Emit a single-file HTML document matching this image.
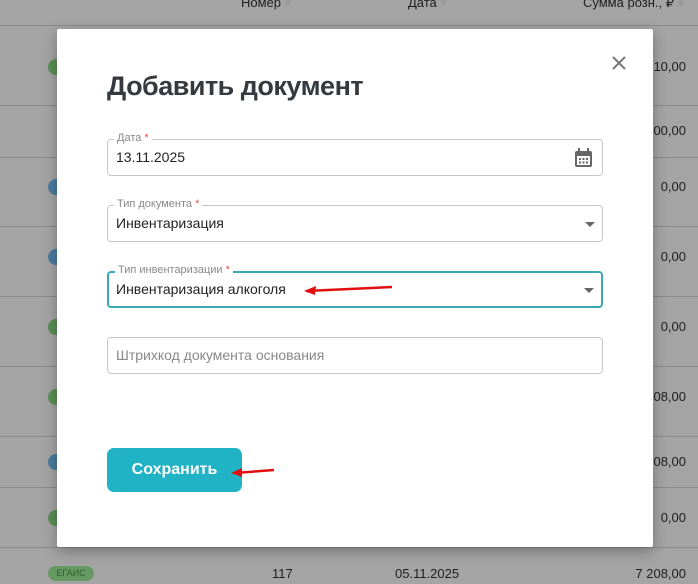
<!DOCTYPE html>
<html><head><meta charset="utf-8"><style>
*{box-sizing:border-box;margin:0;padding:0}
body{width:698px;height:584px;overflow:hidden;background:#a4a4a4;font-family:"Liberation Sans","Noto Sans CJK SC",sans-serif;position:relative}
.line{position:absolute;left:0;width:698px;height:1px;background:#8a8a8a}
.t{position:absolute;font-size:13px;color:#1e1e1e}
.dot{position:absolute;left:48px;width:16px;height:16px;border-radius:8px}
.g{background:#5a8f57}.b{background:#4a7ca0}
.modal{position:absolute;left:57px;top:29px;width:596px;height:518px;background:#fff;border-radius:2px;box-shadow:0 4px 14px rgba(0,0,0,.3)}
.f{position:absolute;left:50px;width:496px;height:37px;border:1px solid #c8c8c8;border-radius:4px}
.lab{position:absolute;left:6px;top:-8px;background:#fff;padding:0 3px;font-size:11px;color:#888}
.lab i{font-style:normal;color:#d9534f}
.val{position:absolute;left:8px;top:9px;font-size:14px;color:#222}
.caret{position:absolute;right:7px;top:16px;width:0;height:0;border-left:5px solid transparent;border-right:5px solid transparent;border-top:5px solid #666}
</style></head><body>
<div class="t" style="left:241px;top:-5px">Номер <span style="color:#999">▾</span></div>
<div class="t" style="left:408px;top:-5px">Дата <span style="color:#999">▾</span></div>
<div class="t" style="left:583px;top:-5px">Сумма розн., ₽ <span style="color:#999">▾</span></div>
<div class="line" style="top:25px"></div>
<div class="line" style="top:105px"></div>
<div class="line" style="top:157px"></div>
<div class="line" style="top:226px"></div>
<div class="line" style="top:296px"></div>
<div class="line" style="top:366px"></div>
<div class="line" style="top:436px"></div>
<div class="line" style="top:487px"></div>
<div class="line" style="top:547px"></div>
<div class="dot g" style="top:59px"></div>
<div class="dot b" style="top:179px"></div>
<div class="dot b" style="top:249px"></div>
<div class="dot g" style="top:319px"></div>
<div class="dot g" style="top:389px"></div>
<div class="dot b" style="top:454px"></div>
<div class="dot g" style="top:510px"></div>
<div class="t" style="right:12px;top:59px">10,00</div>
<div class="t" style="right:12px;top:123px">00,00</div>
<div class="t" style="right:12px;top:179px">0,00</div>
<div class="t" style="right:12px;top:249px">0,00</div>
<div class="t" style="right:12px;top:319px">0,00</div>
<div class="t" style="right:12px;top:389px">208,00</div>
<div class="t" style="right:12px;top:454px">208,00</div>
<div class="t" style="right:12px;top:510px">0,00</div>
<div style="position:absolute;left:48px;top:566px;width:46px;height:15px;border-radius:8px;background:#669a62;color:#2f5a2c;font-size:9px;text-align:center;line-height:15px">ЕГАИС</div>
<div class="t" style="left:272px;top:566px">117</div>
<div class="t" style="left:395px;top:566px">05.11.2025</div>
<div class="t" style="right:12px;top:566px">7 208,00</div>

<div class="modal">
 <svg style="position:absolute;right:27px;top:27px" width="14" height="14"><path d="M1 1L13 13M13 1L1 13" stroke="#777" stroke-width="2"/></svg>
 <div style="position:absolute;left:50px;top:42px;font-size:27px;font-weight:bold;color:#343a40;letter-spacing:-0.5px">Добавить документ</div>
 <div class="f" style="top:110px"><div class="lab">Дата <i>*</i></div><div class="val">13.11.2025</div>
  <svg style="position:absolute;right:9px;top:8px" width="19" height="20" viewBox="0 0 19 20"><rect x="1" y="3" width="17" height="16" rx="2" fill="#666"/><rect x="3" y="8" width="13" height="9" fill="#fff"/><rect x="4" y="0" width="2" height="5" fill="#666"/><rect x="13" y="0" width="2" height="5" fill="#666"/><g fill="#666"><rect x="5" y="10" width="2" height="2"/><rect x="8.5" y="10" width="2" height="2"/><rect x="12" y="10" width="2" height="2"/><rect x="5" y="13.5" width="2" height="2"/><rect x="8.5" y="13.5" width="2" height="2"/><rect x="12" y="13.5" width="2" height="2"/></g></svg></div>
 <div class="f" style="top:176px"><div class="lab">Тип документа <i>*</i></div><div class="val">Инвентаризация</div><div class="caret"></div></div>
 <div class="f" style="top:242px;border:2px solid #3aa9b5"><div class="lab" style="top:-9px">Тип инвентаризации <i>*</i></div><div class="val" style="top:8px;left:7px">Инвентаризация алкоголя</div><div class="caret" style="top:15px"></div></div>
 <svg style="position:absolute;left:245px;top:255px" width="95" height="12"><path d="M4 7 L90 3" stroke="#e01010" stroke-width="2.5"/><path d="M2 7 L14 2 L13 11 Z" fill="#e01010"/></svg>
 <div class="f" style="top:308px"><div class="val" style="color:#888;top:9px">Штрихкод документа основания</div></div>
 <div style="position:absolute;left:50px;top:419px;width:135px;height:44px;border-radius:7px;background:#20b3c6;color:#fff;font-weight:bold;font-size:16px;text-align:center;line-height:44px">Сохранить</div>
 <svg style="position:absolute;left:172px;top:437px" width="50" height="12"><path d="M6 7 L45 4" stroke="#e01010" stroke-width="2.5"/><path d="M2 7 L13 2 L13 11 Z" fill="#e01010"/></svg>
</div>
</body></html>
